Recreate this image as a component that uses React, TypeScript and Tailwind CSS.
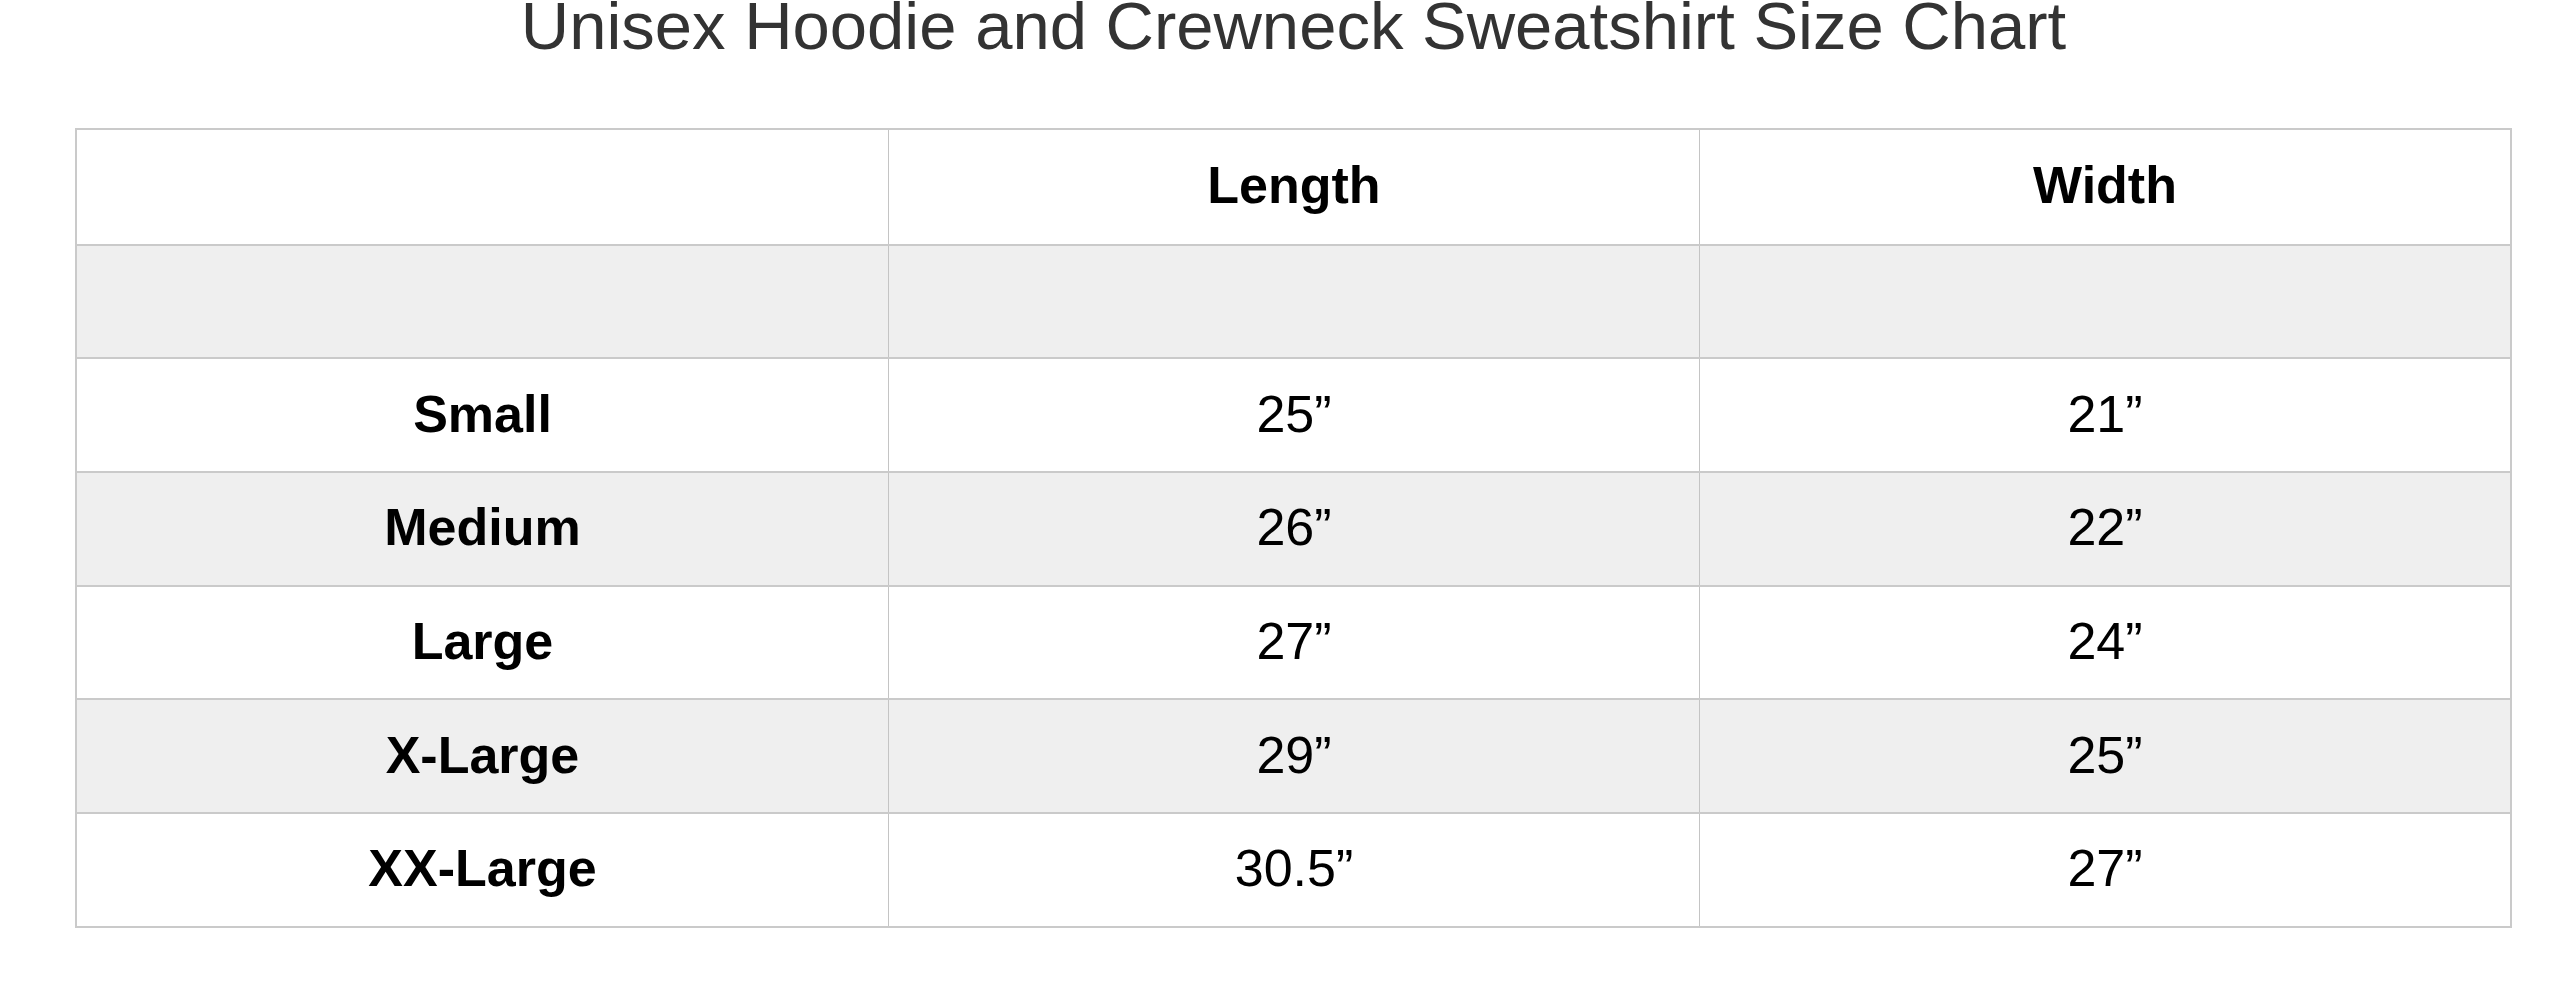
const rows = [
  { size: '', length: '', width: '' },
  { size: 'Small', length: '25”', width: '21”' },
  { size: 'Medium', length: '26”', width: '22”' },
  { size: 'Large', length: '27”', width: '24”' },
  { size: 'X-Large', length: '29”', width: '25”' },
  { size: 'XX-Large', length: '30.5”', width: '27”' },
]

export default function App() {
  return (
    <div className="min-h-screen bg-white font-['Liberation_Sans',Arial,sans-serif]">
      <div className="w-[2437px] ml-[75px]">
        <h1 className="text-center text-[67px] leading-[52px] text-[#333333] font-normal">
          Unisex Hoodie and Crewneck Sweatshirt Size Chart
        </h1>

        <div className="mt-[76px] border-2 border-[#cacaca] text-black text-[52px]">
          <div className="grid grid-cols-3 h-[113.7px] bg-white font-bold">
            <div />
            <div className="flex items-center justify-center pb-[4px] border-l border-[#c4c4c4]">Length</div>
            <div className="flex items-center justify-center pb-[4px] border-l border-[#c4c4c4]">Width</div>
          </div>
          {rows.map((r, i) => (
            <div
              key={i}
              className={`grid grid-cols-3 h-[113.7px] border-t-2 border-[#cacaca] ${i % 2 === 0 ? 'bg-[#efefef]' : 'bg-white'}`}
            >
              <div className="flex items-center justify-center pb-[3px] font-bold">{r.size}</div>
              <div className="flex items-center justify-center pb-[3px] border-l border-[#c4c4c4]">{r.length}</div>
              <div className="flex items-center justify-center pb-[3px] border-l border-[#c4c4c4]">{r.width}</div>
            </div>
          ))}
        </div>
      </div>
    </div>
  )
}
